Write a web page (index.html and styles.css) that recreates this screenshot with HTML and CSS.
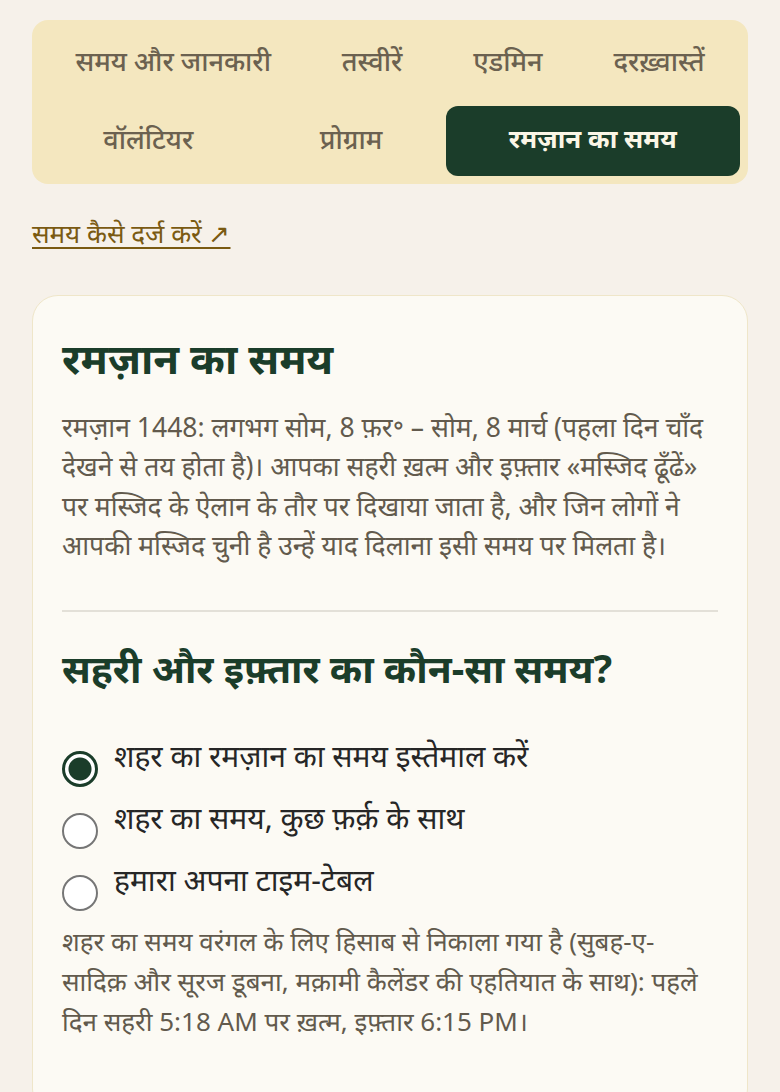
FILE: index.html
```html
<!DOCTYPE html>
<html lang="hi">
<head>
<meta charset="utf-8">
<title>रमज़ान का समय</title>
<link rel="stylesheet" href="styles.css">
</head>
<body>
<div class="page">
  <nav class="tabs">
    <a class="tab" href="#">समय और जानकारी</a>
    <a class="tab" href="#">तस्वीरें</a>
    <a class="tab" href="#">एडमिन</a>
    <a class="tab" href="#">दरख़्वास्तें</a>
    <a class="tab" href="#">वॉलंटियर</a>
    <a class="tab" href="#">प्रोग्राम</a>
    <a class="tab active" href="#">रमज़ान का समय</a>
  </nav>

  <a class="help-link" href="#">समय कैसे दर्ज करें ↗</a>

  <section class="card">
    <h1 class="title">रमज़ान का समय</h1>
    <p class="intro">रमज़ान 1448: लगभग सोम, 8 फ़र॰ – सोम, 8 मार्च (पहला दिन चाँद देखने से तय होता है)। आपका सहरी ख़त्म और इफ़्तार «मस्जिद ढूँढें» पर मस्जिद के ऐलान के तौर पर दिखाया जाता है, और जिन लोगों ने आपकी मस्जिद चुनी है उन्हें याद दिलाना इसी समय पर मिलता है।</p>
    <hr class="divider">
    <h2 class="subtitle">सहरी और इफ़्तार का कौन-सा समय?</h2>
    <div class="options">
      <label class="option"><input type="radio" name="mode" checked><span>शहर का रमज़ान का समय इस्तेमाल करें</span></label>
      <label class="option"><input type="radio" name="mode"><span>शहर का समय, कुछ फ़र्क़ के साथ</span></label>
      <label class="option"><input type="radio" name="mode"><span>हमारा अपना टाइम-टेबल</span></label>
    </div>
    <p class="note">शहर का समय वरंगल के लिए हिसाब से निकाला गया है (सुबह-ए-सादिक़ और सूरज डूबना, मक़ामी कैलेंडर की एहतियात के साथ): पहले दिन सहरी 5:18 AM पर ख़त्म, इफ़्तार 6:15 PM।</p>
  </section>
</div>
</body>
</html>
```

FILE: styles.css
```css
* { box-sizing: border-box; }

html, body {
  margin: 0;
  padding: 0;
  background: #f6f1ea;
}

body {
  font-family: "Noto Sans", "Noto Sans Devanagari", sans-serif;
  color: #2b2b2b;
}

.page {
  padding: 20px 32px 0;
}

.tabs {
  display: flex;
  flex-wrap: wrap;
  gap: 8px 0;
  padding: 8px;
  background: #f4e7bf;
  border-radius: 16px;
}

.tab {
  flex: 1 1 auto;
  height: 70px;
  padding: 0 30px 6px;
  display: flex;
  align-items: center;
  justify-content: center;
  font-size: 27px;
  font-weight: 500;
  color: #6b6150;
  text-decoration: none;
  border-radius: 12px;
  white-space: nowrap;
}

.tab.active {
  background: #1b3d2a;
  color: #fbf6e6;
  font-weight: 700;
  font-size: 26px;
}

.help-link {
  display: inline-block;
  margin-top: 31px;
  font-size: 26px;
  line-height: 36px;
  color: #7a5a12;
  text-decoration: underline;
  text-decoration-thickness: 2px;
  text-underline-offset: 4px;
}

.card {
  margin-top: 44px;
  background: #fcfaf4;
  border: 1.5px solid #efe6c9;
  border-radius: 26px;
  padding: 35px 29px 60px;
  min-height: 820px;
}

.title {
  margin: 0;
  font-size: 42px;
  font-weight: 700;
  color: #1b3d2a;
  line-height: 1.3;
}

.intro {
  margin: 22px 0 0;
  font-size: 26.5px;
  line-height: 39.5px;
  color: #625a4d;
}

.divider {
  margin: 44px 0 0;
  border: 0;
  height: 2px;
  background: #e3e0d8;
}

.subtitle {
  margin: 31px 0 0;
  font-size: 39px;
  font-weight: 700;
  color: #1b3d2a;
  line-height: 1.3;
}

.options {
  margin-top: 40px;
  display: flex;
  flex-direction: column;
  gap: 8px;
}

.option {
  display: flex;
  align-items: flex-start;
  gap: 16px;
  font-size: 30px;
  line-height: 46px;
  color: #262626;
}

.option input {
  appearance: none;
  -webkit-appearance: none;
  margin: 18px 0 0;
  width: 36px;
  height: 36px;
  border-radius: 50%;
  border: 2px solid #767676;
  background: #ffffff;
  flex: 0 0 auto;
}

.option input:checked {
  border: 3px solid #1b3d2a;
  background: radial-gradient(circle, #1b3d2a 0 11px, #ffffff 12px);
}

.note {
  margin: 10px 0 0;
  font-size: 26px;
  line-height: 40px;
  color: #625a4d;
}
```
